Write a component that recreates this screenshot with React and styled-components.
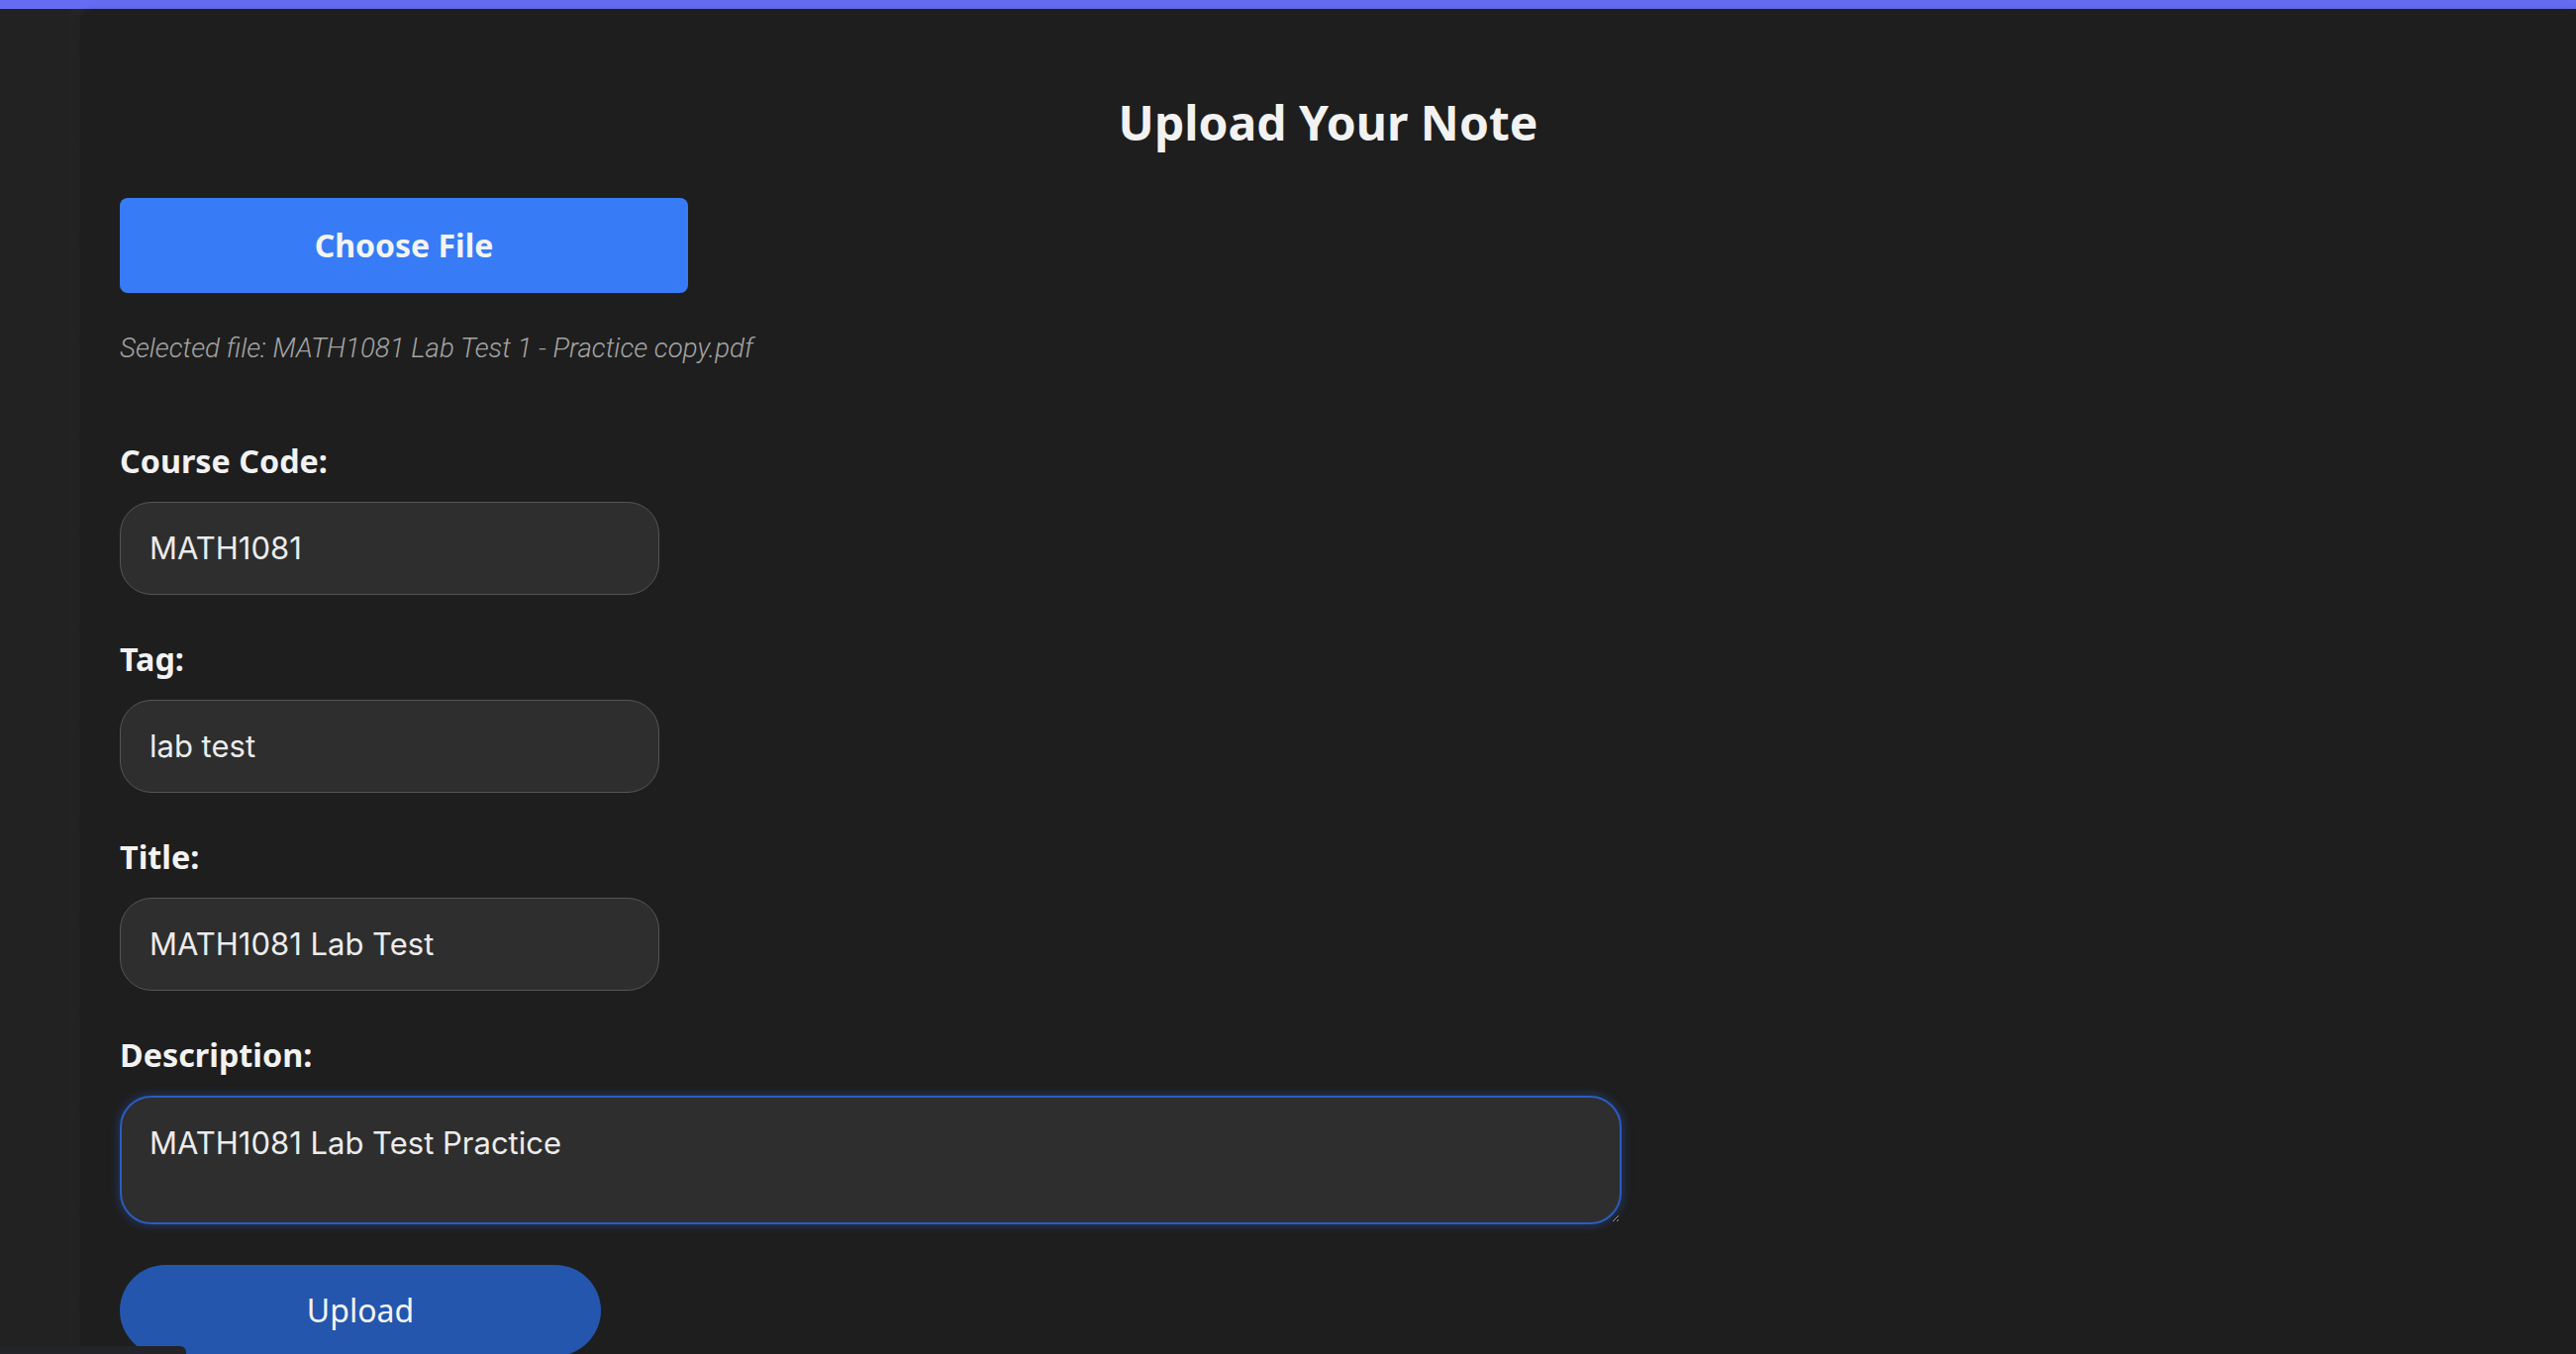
import React from "react";
import styled, { createGlobalStyle } from "styled-components";

const GlobalStyle = createGlobalStyle`
  html, body {
    margin: 0;
    padding: 0;
    background: #232323;
  }
  body {
    font-family: "Noto Sans", "Open Sans", sans-serif;
    color: #f2f2f2;
  }
  * { box-sizing: border-box; }
`;

const TopBar = styled.div`
  height: 9px;
  background: #656cf2;
`;

const Shell = styled.div`
  display: flex;
  min-height: calc(100vh - 9px);
`;

const Rail = styled.aside`
  width: 81px;
  flex-shrink: 0;
  background: linear-gradient(90deg, #222222 0, #222222 68px, #252525 81px);
`;

const Main = styled.main`
  flex: 1;
  background: #1e1e1e;
  border-top-left-radius: 16px;
  padding: 86px 40px 0 40px;
  box-shadow: -2px 0 6px rgba(0, 0, 0, 0.12);
`;

const Title = styled.h1`
  margin: 0;
  text-align: center;
  font-family: "Noto Sans", sans-serif;
  font-weight: 700;
  font-size: 48px;
  line-height: 57.6px;
  color: #f2f2f2;
`;

const ChooseButton = styled.button`
  display: block;
  margin-top: 47px;
  width: 574px;
  height: 96px;
  border: none;
  border-radius: 8px;
  background: #377cf6;
  color: #f4f4f4;
  font-family: "Noto Sans", sans-serif;
  font-weight: 700;
  font-size: 32px;
  cursor: pointer;
`;

const FileNote = styled.p`
  margin: 41px 0 0 0;
  font-family: Roboto, sans-serif;
  font-weight: 300;
  font-style: italic;
  font-size: 27.7px;
  line-height: 30px;
  color: #a4a4a4;
`;

const Form = styled.form`
  margin-top: 77px;
  display: flex;
  flex-direction: column;
  align-items: flex-start;
`;

const Field = styled.div`
  display: flex;
  flex-direction: column;
  align-items: flex-start;
  margin-bottom: ${(p) => (p.$last ? "41px" : "43px")};
`;

const Label = styled.label`
  font-family: "Noto Sans", sans-serif;
  font-weight: 700;
  font-size: 32.3px;
  line-height: 42px;
  color: #f2f2f2;
  margin-bottom: 21px;
`;

const TextInput = styled.input`
  width: 545px;
  height: 94px;
  padding: 0 29px;
  border: 1.5px solid #555555;
  border-radius: 32px;
  background: #2e2e2e;
  color: #ececec;
  font-family: Inter, "Noto Sans", sans-serif;
  font-size: 31px;
  outline: none;
`;

const TextArea = styled.textarea`
  width: 1517px;
  height: 130px;
  padding: 27px 28px 20px 28px;
  border: 2px solid #2a5cc2;
  border-radius: 32px;
  background: #2e2e2e;
  color: #ececec;
  font-family: Inter, "Noto Sans", sans-serif;
  font-size: 31px;
  line-height: normal;
  outline: none;
  box-shadow: 0 0 8px 2px rgba(42, 92, 194, 0.35);
  resize: vertical;
`;

const UploadButton = styled.button`
  width: 486px;
  height: 92px;
  border: none;
  border-radius: 46px;
  background: #2456ae;
  color: #f4f4f4;
  font-family: "Noto Sans", sans-serif;
  font-size: 32px;
  font-weight: 400;
  cursor: pointer;
`;

const CornerTab = styled.div`
  position: fixed;
  left: 0;
  bottom: 0;
  width: 188px;
  height: 8px;
  background: #222429;
  border-top-right-radius: 6px;
`;

const fields = [
  { id: "course", label: "Course Code:", value: "MATH1081" },
  { id: "tag", label: "Tag:", value: "lab test" },
  { id: "title", label: "Title:", value: "MATH1081 Lab Test" },
];

export default function App() {
  return (
    <>
      <GlobalStyle />
      <TopBar />
      <Shell>
        <Rail />
        <Main>
          <Title>Upload Your Note</Title>
          <ChooseButton type="button">Choose File</ChooseButton>
          <FileNote>Selected file: MATH1081 Lab Test 1 - Practice copy.pdf</FileNote>
          <Form onSubmit={(e) => e.preventDefault()}>
            {fields.map((f) => (
              <Field key={f.id}>
                <Label htmlFor={f.id}>{f.label}</Label>
                <TextInput id={f.id} defaultValue={f.value} />
              </Field>
            ))}
            <Field $last>
              <Label htmlFor="desc">Description:</Label>
              <TextArea id="desc" defaultValue="MATH1081 Lab Test Practice" />
            </Field>
            <UploadButton type="submit">Upload</UploadButton>
          </Form>
        </Main>
      </Shell>
      <CornerTab />
    </>
  );
}
